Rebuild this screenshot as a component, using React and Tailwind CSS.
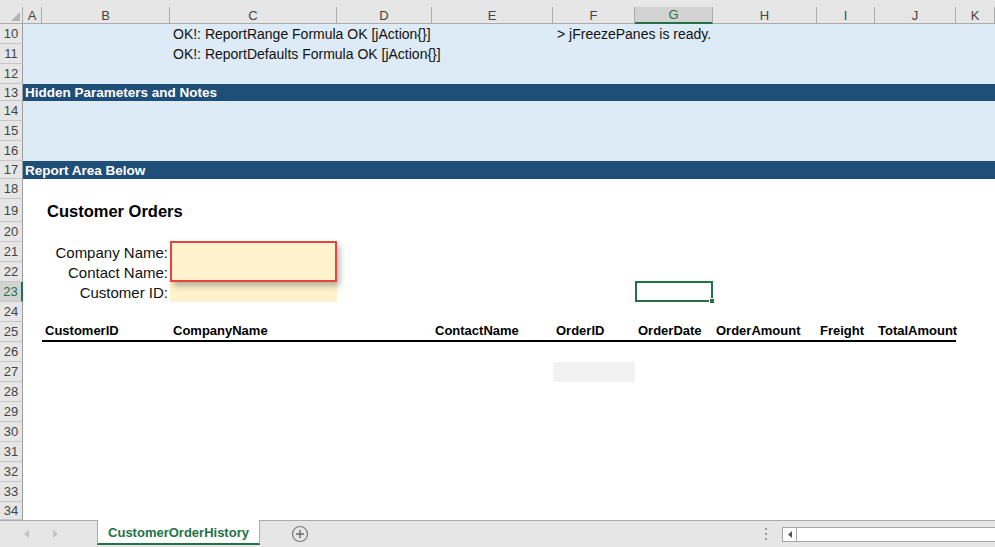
import React from "react";

const COLS =
  "grid grid-cols-[19px_128px_167px_95px_121px_82px_78px_104px_58px_81px_1fr]";

const HEADERS = [
  { k: "A", w: "w-[19px]" },
  { k: "B", w: "w-[128px]" },
  { k: "C", w: "w-[167px]" },
  { k: "D", w: "w-[95px]" },
  { k: "E", w: "w-[121px]" },
  { k: "F", w: "w-[82px]" },
  { k: "G", w: "w-[78px]", active: true },
  { k: "H", w: "w-[104px]" },
  { k: "I", w: "w-[58px]" },
  { k: "J", w: "w-[81px]" },
  { k: "K", w: "flex-1" },
];

const REPORT_COLS = [
  { col: "col-start-2", label: "CustomerID" },
  { col: "col-start-3", label: "CompanyName" },
  { col: "col-start-4", label: "" },
  { col: "col-start-5", label: "ContactName" },
  { col: "col-start-6", label: "OrderID" },
  { col: "col-start-7", label: "OrderDate" },
  { col: "col-start-8", label: "OrderAmount" },
  { col: "col-start-9", label: "Freight" },
  { col: "col-start-10", label: "TotalAmount" },
];

const RowHead = ({ n, active }) => (
  <div
    className={`flex w-[23px] flex-1 shrink-0 items-center justify-center border-b border-[#c6c6c6] font-['Liberation_Sans',sans-serif] text-[13px] leading-none ${
      active
        ? "border-r-2 border-r-[#217346] bg-[#d2d2d2] text-[#217346]"
        : "border-r border-r-[#9e9e9e] bg-[#e6e6e6] text-[#444]"
    }`}
  >
    {n}
  </div>
);

const Row = ({ n, h = "h-[20px]", bg = "bg-white", active, children }) => (
  <div className={`flex shrink-0 ${h}`}>
    <div className="flex w-[23px] shrink-0 flex-col">
      <RowHead n={n} active={active} />
    </div>
    <div className={`${COLS} flex-1 grid-rows-1 ${bg}`}>{children}</div>
  </div>
);

const ColumnHeader = () => (
  <div className="flex h-[24px] shrink-0 bg-[#e6e6e6] pt-[7px] font-['Liberation_Sans',sans-serif] text-[13px] leading-none text-[#444]">
    <div className="flex w-[23px] shrink-0 items-end justify-end border-r border-b border-[#ababab] pr-[2px] pb-[2px]">
      <svg width="9" height="9" viewBox="0 0 9 9">
        <path d="M9 0 L9 9 L0 9 Z" fill="#b4b4b4" />
      </svg>
    </div>
    {HEADERS.map((h) => (
      <div
        key={h.k}
        className={`flex shrink-0 items-center justify-center ${h.w} ${
          h.active
            ? "border-r border-b-2 border-r-[#ababab] border-b-[#217346] bg-[#d2d2d2] text-[#217346]"
            : "border-r border-b border-[#ababab]"
        }`}
      >
        {h.k}
      </div>
    ))}
  </div>
);

const cell = "flex min-h-0 items-center overflow-visible whitespace-nowrap pt-px";

const Sheet = () => (
  <div className="flex flex-1 flex-col font-['Liberation_Sans',sans-serif] text-[14px] leading-[1.15] text-[#111]">
    <Row n={10} bg="bg-[#ddebf7]">
      <div className={`${cell} col-start-3 pl-[3px]`}>OK!: ReportRange Formula OK [jAction{"{}"}]</div>
      <div className={`${cell} col-start-6 pl-[4px]`}>&gt; jFreezePanes is ready.</div>
    </Row>
    <Row n={11} bg="bg-[#ddebf7]">
      <div className={`${cell} col-start-3 pl-[3px]`}>OK!: ReportDefaults Formula OK [jAction{"{}"}]</div>
    </Row>
    <Row n={12} bg="bg-[#ddebf7]" />
    <Row n={13} h="h-[17px]" bg="bg-[#1f4e78]">
      <div className={`${cell} col-span-11 col-start-1 pl-[2px] text-[13.5px] font-bold text-white`}>
        Hidden Parameters and Notes
      </div>
    </Row>
    <Row n={14} bg="bg-[#ddebf7]" />
    <Row n={15} bg="bg-[#ddebf7]" />
    <Row n={16} bg="bg-[#ddebf7]" />
    <Row n={17} h="h-[18px]" bg="bg-[#1f4e78]">
      <div className={`${cell} col-span-11 col-start-1 pl-[2px] text-[13.5px] font-bold text-white`}>
        Report Area Below
      </div>
    </Row>
    <Row n={18} />
    <Row n={19} h="h-[23px]">
      <div className={`${cell} col-start-2 pl-[5px] text-[16.5px] font-bold text-black`}>Customer Orders</div>
    </Row>
    <Row n={20} />

    <div className="flex h-[40px] shrink-0">
      <div className="flex w-[23px] shrink-0 flex-col">
        <RowHead n={21} />
        <RowHead n={22} />
      </div>
      <div className={`${COLS} flex-1 grid-rows-[20px_20px] bg-white text-[15px]`}>
        <div className={`${cell} col-start-2 row-start-1 justify-end pr-[2px]`}>Company Name:</div>
        <div className={`${cell} col-start-2 row-start-2 justify-end pr-[2px]`}>Contact Name:</div>
        <div className="z-10 col-start-3 row-span-2 row-start-1 -mt-px border-2 border-[#e5463c] bg-[#fff2cc] shadow-[3px_4px_6px_rgba(0,0,0,0.28)]" />
      </div>
    </div>

    <Row n={23} active>
      <div className={`${cell} col-start-2 justify-end pr-[2px] text-[15px]`}>Customer ID:</div>
      <div className="col-start-3 bg-[#fff2cc]" />
      <div className="relative col-start-7 -mt-px border-2 border-[#217346]">
        <div className="absolute -right-[4px] -bottom-[4px] h-[6px] w-[6px] border border-white bg-[#217346]" />
      </div>
    </Row>
    <Row n={24} />
    <Row n={25}>
      {REPORT_COLS.map((c) => (
        <div
          key={c.col}
          className={`${cell} ${c.col} border-b-2 border-black pl-[3px] text-[13px] font-bold text-black`}
        >
          {c.label}
        </div>
      ))}
    </Row>
    <Row n={26} />
    <Row n={27}>
      <div className="col-start-6 bg-[#f2f2f2]" />
    </Row>
    {[28, 29, 30, 31, 32, 33].map((n) => (
      <Row key={n} n={n} />
    ))}
    <Row n={34} h="h-[18px]" />
  </div>
);

const TabBar = () => (
  <div className="flex h-[27px] shrink-0 bg-[#e6e6e6]">
    <div className="flex w-[97px] shrink-0 items-center border-t border-[#ababab]">
      <svg width="5" height="8" viewBox="0 0 5 8" className="ml-[24px]">
        <path d="M5 0 L0 4 L5 8 Z" fill="#c3c3c3" />
      </svg>
      <svg width="5" height="8" viewBox="0 0 5 8" className="ml-[24px]">
        <path d="M0 0 L5 4 L0 8 Z" fill="#c3c3c3" />
      </svg>
    </div>
    <div className="flex h-[25px] w-[163px] shrink-0 items-center justify-center border-x border-b-2 border-x-[#ababab] border-b-[#217346] bg-white pt-[3px] font-['Liberation_Sans',sans-serif] text-[13px] font-bold text-[#217346]">
      CustomerOrderHistory
    </div>
    <div className="flex flex-1 items-center border-t border-[#ababab]">
      <svg width="18" height="18" viewBox="0 0 18 18" className="ml-[31px]">
        <circle cx="9" cy="9" r="7.5" fill="none" stroke="#7a7a7a" strokeWidth="1.2" />
        <path d="M9 5 V13 M5 9 H13" stroke="#6a6a6a" strokeWidth="1.4" />
      </svg>
      <div className="flex-1" />
      <div className="flex flex-col gap-[3px]">
        <div className="h-[2px] w-[2px] bg-[#9b9b9b]" />
        <div className="h-[2px] w-[2px] bg-[#9b9b9b]" />
        <div className="h-[2px] w-[2px] bg-[#9b9b9b]" />
      </div>
      <div className="ml-[15px] flex h-[15px] w-[213px] border border-r-0 border-[#a6a6a6] bg-white">
        <div className="flex w-[14px] items-center justify-center border-r border-[#a6a6a6]">
          <svg width="4" height="7" viewBox="0 0 4 7">
            <path d="M4 0 L0 3.5 L4 7 Z" fill="#555" />
          </svg>
        </div>
      </div>
    </div>
  </div>
);

export default function App() {
  return (
    <div className="flex h-[547px] w-[995px] flex-col overflow-hidden bg-white">
      <ColumnHeader />
      <Sheet />
      <TabBar />
    </div>
  );
}
